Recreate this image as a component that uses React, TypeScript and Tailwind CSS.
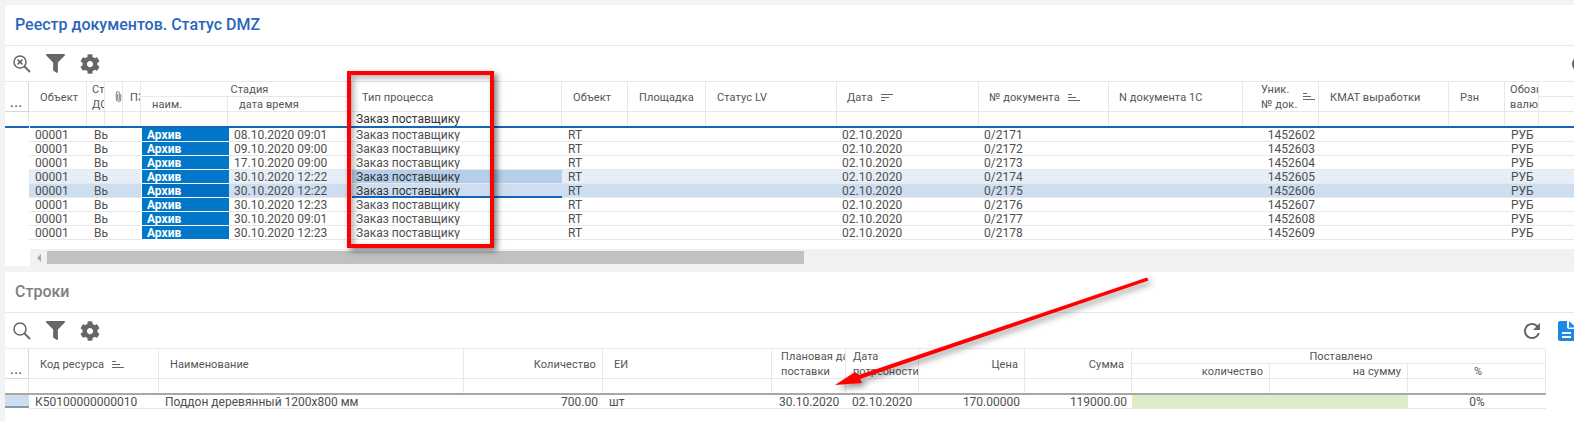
import React from "react";
import { FaFilter, FaCog } from "react-icons/fa";
import { MdRefresh } from "react-icons/md";

const topCols =
  "grid grid-cols-[24px_58px_18px_18px_18px_87px_124px_210px_66px_78px_131px_142px_130px_134px_76px_130px_56px_34px_1fr]";
const botCols =
  "grid grid-cols-[24px_130px_305px_139px_169px_74px_73px_106px_107px_138px_138px_138px] w-[1541px]";
const hb =
  "text-[11px] tracking-[0.1px] leading-[15px] text-[#555] overflow-hidden whitespace-nowrap flex";
const hc = `${hb} items-center border-r border-b border-[#e8e8e8]`;
const hs = `${hc} row-span-2 pt-[2px]`;
const hLast = `${hb} items-center border-b border-[#e8e8e8]`;
const fc = `${hb} items-center border-r border-[#e8e8e8]`;
const dots = `${hb} items-end justify-center font-bold tracking-[1px] text-[#444] border-r border-b border-[#d8d8d8]`;

function SortIcon({ desc }: { desc?: boolean }) {
  const lines = desc ? [12, 8, 4] : [4, 8, 12];
  return (
    <svg width="12" height="8" viewBox="0 0 12 8" className="shrink-0" stroke="#666" strokeWidth="1">
      {lines.map((l, i) => (
        <line key={i} x1={0} x2={l} y1={0.5 + i * 3} y2={0.5 + i * 3} />
      ))}
    </svg>
  );
}

function SearchIcon({ cross }: { cross?: boolean }) {
  return (
    <svg width="18" height="18" viewBox="0 0 18 18" fill="none" stroke="#666" strokeWidth="1.5">
      <circle cx="7" cy="7" r="6" />
      <line x1="11.5" y1="11.5" x2="17" y2="17" strokeWidth="1.8" />
      {cross && <path d="M4.6 4.6L9.4 9.4M9.4 4.6L4.6 9.4" />}
    </svg>
  );
}

function Clip() {
  return (
    <svg width="8" height="13" viewBox="0 0 8 13" fill="none" stroke="#888" strokeWidth="1.2">
      <path d="M6.5 3.5V9.5C6.5 11 5.5 12 4 12S1.5 11 1.5 9.5V3C1.5 1.8 2.3 1 3.3 1S5 1.8 5 3V9C5 9.6 4.6 10 4 10S3 9.6 3 9V3.5" />
    </svg>
  );
}

function FileIcon() {
  return (
    <svg width="18" height="20" viewBox="0 0 18 20" className="shrink-0 -mr-[2px]">
      <path fill="#1e88e5" d="M2 0H9V6C9 7.1 9.9 8 11 8H18V18C18 19.1 17.1 20 16 20H2C.9 20 0 19.1 0 18V2C0 .9.9 0 2 0Z" />
      <path fill="#1e88e5" d="M11 0L18 6.5H11Z" />
      <rect x="4" y="11" width="9" height="2" fill="#fff" />
      <rect x="4" y="15" width="9" height="2" fill="#fff" />
    </svg>
  );
}

function Toolbar({ cross, right }: { cross?: boolean; right?: React.ReactNode }) {
  return (
    <div className="h-[35px] shrink-0 flex items-center pl-[8px]">
      <SearchIcon cross={cross} />
      <span className="ml-[15px] text-[#666] flex"><FaFilter size={19} /></span>
      <span className="ml-[15px] text-[#666] flex"><FaCog size={20} /></span>
      {right}
    </div>
  );
}

const rows: [string, string, string, string][] = [
  ["08.10.2020 09:01", "0/2171", "1452602", ""],
  ["09.10.2020 09:00", "0/2172", "1452603", ""],
  ["17.10.2020 09:00", "0/2173", "1452604", ""],
  ["30.10.2020 12:22", "0/2174", "1452605", "bg-[#e6eef8]"],
  ["30.10.2020 12:22", "0/2175", "1452606", "bg-[#cedef1]"],
  ["30.10.2020 12:23", "0/2176", "1452607", ""],
  ["30.10.2020 09:01", "0/2177", "1452608", ""],
  ["30.10.2020 12:23", "0/2178", "1452609", ""],
];

const cell = "h-[14px] leading-[15px] overflow-hidden whitespace-nowrap";
const cb = `${cell} border-b border-[#e8e8e8]`;

function RowCells({ r, idx }: { r: string[]; idx: number }) {
  const b = `${cb} ${r[3]}`;
  const typeCell =
    idx === 3
      ? `${cb} bg-[#b5cfea] text-[#333] pl-[4px]`
      : idx === 4
        ? `${cell} border-b-2 border-[#1565b8] bg-[#cedef1] text-[#333] pl-[4px]`
        : `${cb} pl-[4px]`;
  return (
    <>
      <div className={`${b} pl-[6px]`}>00001</div>
      <div className={`${b} col-span-3 pl-[7px]`}>Вь</div>
      <div className="h-[14px]">
        <div
          className={`relative h-[13px] w-[87px] ml-[1px] leading-[15px] overflow-hidden text-white font-bold pl-[5px] ${
            idx === 4 ? "bg-[#0070c4]" : "bg-[#0077c8]"
          }`}
        >
          Архив
        </div>
      </div>
      <div className={`${b} pl-[6px]`}>{r[0]}</div>
      <div className={typeCell}>Заказ поставщику</div>
      <div className={`${b} pl-[6px]`}>RT</div>
      <div className={b} />
      <div className={b} />
      <div className={`${b} pl-[5px]`}>02.10.2020</div>
      <div className={`${b} pl-[5px]`}>{r[1]}</div>
      <div className={b} />
      <div className={`${b} text-right pr-[4px]`}>{r[2]}</div>
      <div className={b} />
      <div className={b} />
      <div className={`${b} pl-[6px]`}>РУБ</div>
      <div className={b} />
    </>
  );
}

function TopTable() {
  return (
    <div>
      <div className={`${topCols} grid-rows-[15px_15px_14px] border-t border-[#e8e8e8]`}>
        <div className={`${dots} row-span-2`}>...</div>
        <div className={`${hs} pl-[11px]`}>Объект</div>
        <div className={`${hc} row-span-2 pl-[5px]`}>Ст<br />ДО</div>
        <div className={`${hc} row-span-2 pl-[10px]`}><Clip /></div>
        <div className={`${hs} pl-[7px]`}>ПЗ</div>
        <div className={`${hc} col-span-2 justify-center pl-[7px]`}>Стадия</div>
        <div className={`${hs} pl-[10px]`}>Тип процесса</div>
        <div className={`${hs} pl-[11px]`}>Объект</div>
        <div className={`${hs} pl-[11px]`}>Площадка</div>
        <div className={`${hs} pl-[11px]`}>Статус LV</div>
        <div className={`${hs} pl-[10px] gap-[8px]`}>Дата <SortIcon desc /></div>
        <div className={`${hs} pl-[10px] gap-[8px]`}>№ документа <SortIcon /></div>
        <div className={`${hs} pl-[10px]`}>N документа 1С</div>
        <div className={`${hc} row-span-2 pl-[18px] justify-between pr-[3px]`}>
          <span>Уник.<br />№ док.</span>
          <SortIcon />
        </div>
        <div className={`${hs} pl-[11px]`}>КМАТ выработки</div>
        <div className={`${hs} pl-[11px]`}>Рзн</div>
        <div className={`${hc} row-span-2 pl-[5px]`}>Обозн<br />валют</div>
        <div className={hLast} />
        <div className={`${hc} pl-[11px]`}>наим.</div>
        <div className={`${hc} pl-[11px]`}>дата время</div>
        <div className={hLast} />
        {Array.from({ length: 7 }).map((_, i) => (
          <div key={i} className={fc} />
        ))}
        <div className={`${fc} pl-[4px]`}>
          <span className="text-[12px] tracking-normal text-[#333]">Заказ поставщику</span>
        </div>
        {Array.from({ length: 10 }).map((_, i) => (
          <div key={i} className={fc} />
        ))}
        <div />
      </div>
      <div className="h-[2px] flex">
        <div className="w-[24px] bg-[#1565b8]" />
        <div className="w-[1px] bg-white" />
        <div className="flex-1 bg-[#1565b8]" />
      </div>
      <div className="text-[12px] text-[#4f4f4f]">
        {rows.map((r, i) => (
          <div key={i} className={`${topCols} h-[14px]`}>
            <div />
            <RowCells r={r} idx={i} />
          </div>
        ))}
      </div>
    </div>
  );
}

function BottomTable() {
  return (
    <div>
      <div className={`${botCols} grid-rows-[15px_15px_14px] border-t border-[#e8e8e8]`}>
        <div className={`${dots} row-span-2`}>...</div>
        <div className={`${hs} pl-[11px] gap-[8px]`}>Код ресурса <SortIcon /></div>
        <div className={`${hs} pl-[11px]`}>Наименование</div>
        <div className={`${hs} justify-end pr-[6px]`}>Количество</div>
        <div className={`${hs} pl-[11px]`}>ЕИ</div>
        <div className={`${hc} row-span-2 pl-[9px]`}>Плановая дата<br />поставки</div>
        <div className={`${hc} row-span-2 pl-[7px]`}>
          <span className="tracking-normal">Дата<br />потребности</span>
        </div>
        <div className={`${hs} justify-end pr-[6px]`}>Цена</div>
        <div className={`${hs} justify-end pr-[7px]`}>Сумма</div>
        <div className={`${hc} col-span-3 justify-center pl-[5px]`}>Поставлено</div>
        <div className={`${hc} justify-end pr-[6px]`}>количество</div>
        <div className={`${hc} justify-end pr-[6px]`}>на сумму</div>
        <div className={`${hc} justify-center pl-[3px]`}>%</div>
        {Array.from({ length: 12 }).map((_, i) => (
          <div key={i} className={fc} />
        ))}
      </div>
      <div className="h-[2px] bg-[#a8a8a8] w-[1541px]" />
      <div className={`${botCols} h-[14px] text-[12px] text-[#4f4f4f]`}>
        <div className="h-[13px] bg-[#cedef1] border-b-2 border-[#8a97a8]" />
        <div className={`${cb} pl-[6px]`}>К50100000000010</div>
        <div className={`${cb} pl-[6px]`}>Поддон деревянный 1200х800 мм</div>
        <div className={`${cb} text-right pr-[5px]`}>700.00</div>
        <div className={`${cb} pl-[6px]`}>шт</div>
        <div className={`${cb} pl-[7px]`}>30.10.2020</div>
        <div className={`${cb} pl-[6px]`}>02.10.2020</div>
        <div className={`${cb} text-right pr-[5px]`}>170.00000</div>
        <div className={`${cb} text-right pr-[5px]`}>119000.00</div>
        <div className={`${cb} col-span-2 bg-[#deebc9]`} />
        <div className={`${cb} text-center`}>0%</div>
      </div>
    </div>
  );
}

export default function App() {
  return (
    <div className="relative w-[1574px] h-[421px] overflow-hidden bg-[#f1f3f5] pl-[5px] pt-[5px] flex flex-col gap-[6px] font-['Roboto',sans-serif]">
      <section className="bg-white h-[261px] shrink-0 overflow-hidden flex flex-col">
        <h1 className="h-[41px] shrink-0 border-b border-[#e8e8e8] pl-[10px] flex items-center text-[16px] font-medium text-[#2a66bd]">
          Реестр документов. Статус DMZ
        </h1>
        <Toolbar
          cross
          right={<MdRefresh size={24} className="text-[#666] shrink-0 ml-auto -mr-[18px]" />}
        />
        <TopTable />
        <div className="mt-[9px] ml-[25px] h-[17px] bg-[#f1f1f1] flex items-center">
          <div className="w-[17px] flex justify-center">
            <div className="w-0 h-0 border-y-[4px] border-y-transparent border-r-[4px] border-r-[#aaa]" />
          </div>
          <div className="w-[757px] h-[13px] bg-[#c1c1c1]" />
        </div>
      </section>
      <section className="bg-white flex-1 overflow-hidden flex flex-col">
        <h2 className="h-[41px] shrink-0 border-b border-[#e8e8e8] pl-[10px] flex items-center text-[16px] font-medium text-[#808080]">
          Строки
        </h2>
        <Toolbar
          right={
            <div className="ml-auto flex items-center gap-[14px]">
              <MdRefresh size={24} className="text-[#666]" />
              <FileIcon />
            </div>
          }
        />
        <BottomTable />
      </section>

      <div className="absolute left-[347px] top-[71px] w-[147px] h-[177px] border-4 border-[#f00] shadow-[3px_3px_6px_rgba(0,0,0,0.5),inset_3px_3px_6px_rgba(0,0,0,0.3)]" />
      <svg
        className="absolute left-0 top-0 pointer-events-none drop-shadow-[3px_3px_3px_rgba(0,0,0,0.45)]"
        width="1574"
        height="421"
      >
        <polygon fill="#f00" points="1147,277.5 1148.5,280.5 860,379 862,383 835,385 855,372 859,375" />
      </svg>
    </div>
  );
}
